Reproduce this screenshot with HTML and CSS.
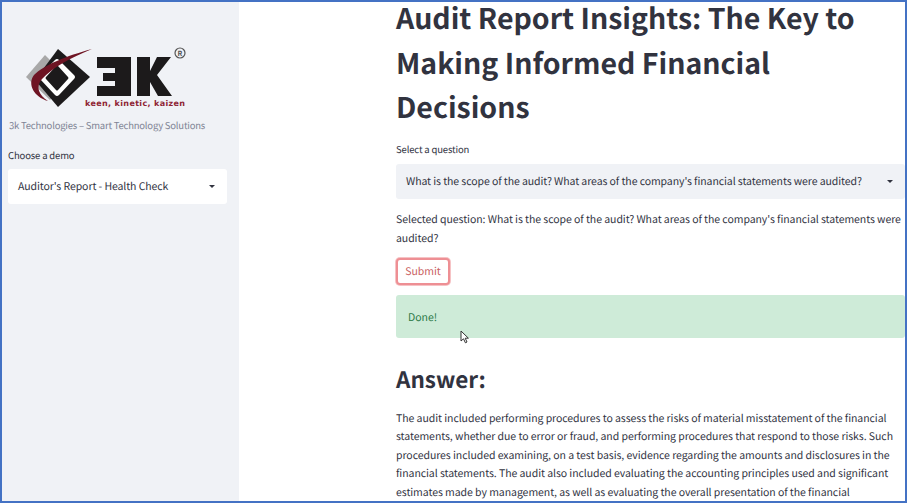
FILE: index.html
```html
<!DOCTYPE html>
<html lang="en">
<head>
    <meta charset="UTF-8">
    <meta name="viewport" content="width=device-width, initial-scale=1.0">
    <title>Audit Report Insights</title>
    <link rel="stylesheet" href="styles.css">
</head>
<body>

<div class="app">
    <aside class="sidebar">
        <svg class="logo" width="170" height="66" viewBox="23 45 170 66">
            <!-- grey square behind the black diamond -->
            <polygon points="26,77 45,55 70,80 50,100" fill="#a8a8a8"/>
            <polygon points="58,49 90,77 58,107 35,80" fill="#1c1a1b"/>
            <path d="M55,60 Q57,58 59,60 L74,75 Q76,77 74,79 L59,95 Q57,97 55,95 L40,79 Q38,77 40,75 Z" fill="#fff"/>
            <path d="M56,66 Q57,65 58,66 L68,77 Q69,78 68,79 L58,90 Q57,91 56,90 L46,79 Q45,78 46,77 Z" fill="#1c1a1b"/>
            <path d="M92,49 C66,56 44,65 34,75 C27,84 34,97 48,101 C39,95 35,87 42,79 C52,68 70,58 92,49 Z" fill="#6e1423"/>
            <path d="M97,57H131V96H97V86H115V81H103V73H115V68H97Z" fill="#1c1a1b"/>
            <polygon points="137,57 150,57 150,71 157,57 171,57 157,75 172,96 158,96 150,82 150,96 137,96" fill="#1c1a1b"/>
            <circle cx="180" cy="53" r="5" fill="none" stroke="#555" stroke-width="1.2"/>
            <text class="registered" x="180" y="55.500">R</text>
            <text class="tagline" x="85" y="106">keen, kinetic, kaizen</text>
        </svg>
        <p class="caption">3k Technologies – Smart Technology Solutions</p>
        <label class="label side-label">Choose a demo</label>
        <div class="select white">
            <span>Auditor's Report - Health Check</span>
            <i class="caret"></i>
        </div>
    </aside>

    <main class="content">
        <h1>Audit Report Insights: The Key to Making Informed Financial Decisions</h1>

        <label class="label">Select a question</label>
        <div class="select grey">
            <span>What is the scope of the audit? What areas of the company's financial statements were audited?</span>
            <i class="caret"></i>
        </div>

        <p class="selected">Selected question: What is the scope of the audit? What areas of the company's financial statements were audited?</p>

        <button class="submit">Submit</button>

        <div class="done">Done!</div>

        <h2>Answer:</h2>
        <p class="answer">The audit included performing procedures to assess the risks of material misstatement of the financial statements, whether due to error or fraud, and performing procedures that respond to those risks. Such procedures included examining, on a test basis, evidence regarding the amounts and disclosures in the financial statements. The audit also included evaluating the accounting principles used and significant estimates made by management, as well as evaluating the overall presentation of the financial</p>

        <svg class="cursor" width="10" height="14" viewBox="0 0 10 14">
            <path d="M1,1V11L3.5,8.8L5.4,12.8L7,12L5.2,8.2H8.4Z" fill="#fff" stroke="#333" stroke-width="1"/>
        </svg>
    </main>
</div>

</body>
</html>
```
FILE: styles.css
```css
* {
    margin: 0;
    padding: 0;
    box-sizing: border-box;
    font-family: "Noto Sans CJK SC", "Noto Sans", sans-serif;
    text-rendering: geometricPrecision;
}

html, body {
    height: 100%;
    overflow: hidden;
    background: white;
}

.app {
    display: flex;
    width: 907px;
    height: 503px;
    border: 2px solid #4472c4;
    overflow: hidden;
}

.sidebar {
    width: 237px;
    flex-shrink: 0;
    background: #f0f2f6;
    padding: 43px 12px 0 6px;
}

.logo {
    display: block;
    margin-left: 15px;
}

.registered {
    font-size: 7px;
    font-weight: 700;
    text-anchor: middle;
    fill: #555;
}

.tagline {
    font-family: "DejaVu Sans", sans-serif;
    font-size: 8px;
    font-weight: 700;
    letter-spacing: 0.35px;
    fill: #8e2333;
}

.caption {
    margin: 7px 0 0 1px;
    font-size: 9.5px;
    letter-spacing: -0.21px;
    line-height: 15px;
    color: #808495;
    white-space: nowrap;
}

.label {
    display: block;
    font-size: 9.5px;
    letter-spacing: -0.15px;
    line-height: 14px;
    color: #31333f;
}

.side-label {
    margin: 15px 0 7px;
}

.select {
    display: flex;
    align-items: center;
    justify-content: space-between;
    height: 35px;
    border-radius: 3px;
    font-size: 10.5px;
    letter-spacing: -0.08px;
    color: #31333f;
    white-space: nowrap;
}

.select.white {
    background: white;
    padding: 0 12px 0 10px;
}

.select.grey {
    background: #f0f2f6;
    padding: 0 12px 0 10px;
    margin-top: 8px;
}

.caret {
    width: 0;
    height: 0;
    border-left: 3.5px solid transparent;
    border-right: 3.5px solid transparent;
    border-top: 3.5px solid #31333f;
}

.content {
    position: relative;
    flex: 1;
    padding: 0 0 0 157px;
    min-width: 0;
}

h1 {
    font-size: 28.5px;
    line-height: 44.7px;
    font-weight: 700;
    color: #31333f;
    margin-top: -6px;
    padding-right: 20px;
}

.content > .label {
    margin-top: 11.4px;
}

.selected {
    margin-top: 11px;
    font-size: 10.5px;
    letter-spacing: -0.06px;
    line-height: 19px;
    color: #31333f;
}

.submit {
    display: block;
    margin-top: 10px;
    width: 54px;
    height: 27px;
    background: white;
    border: 2px solid #ee8f94;
    border-radius: 4px;
    box-shadow: 0 0 0 1px #f6c3c5;
    color: #c9605f;
    font-size: 10.5px;
}

.done {
    margin-top: 10px;
    height: 43px;
    background: #ceebd8;
    border-radius: 3px;
    padding: 14px 12px;
    font-size: 10.5px;
    line-height: 18px;
    color: #2c7a48;
}

h2 {
    margin-top: 23px;
    font-size: 22.5px;
    line-height: 36px;
    font-weight: 700;
    color: #31333f;
}

.answer {
    margin-top: 13px;
    font-size: 10.5px;
    letter-spacing: -0.06px;
    line-height: 18.6px;
    color: #31333f;
}

.cursor {
    position: absolute;
    left: 221px;
    top: 328px;
}
```
